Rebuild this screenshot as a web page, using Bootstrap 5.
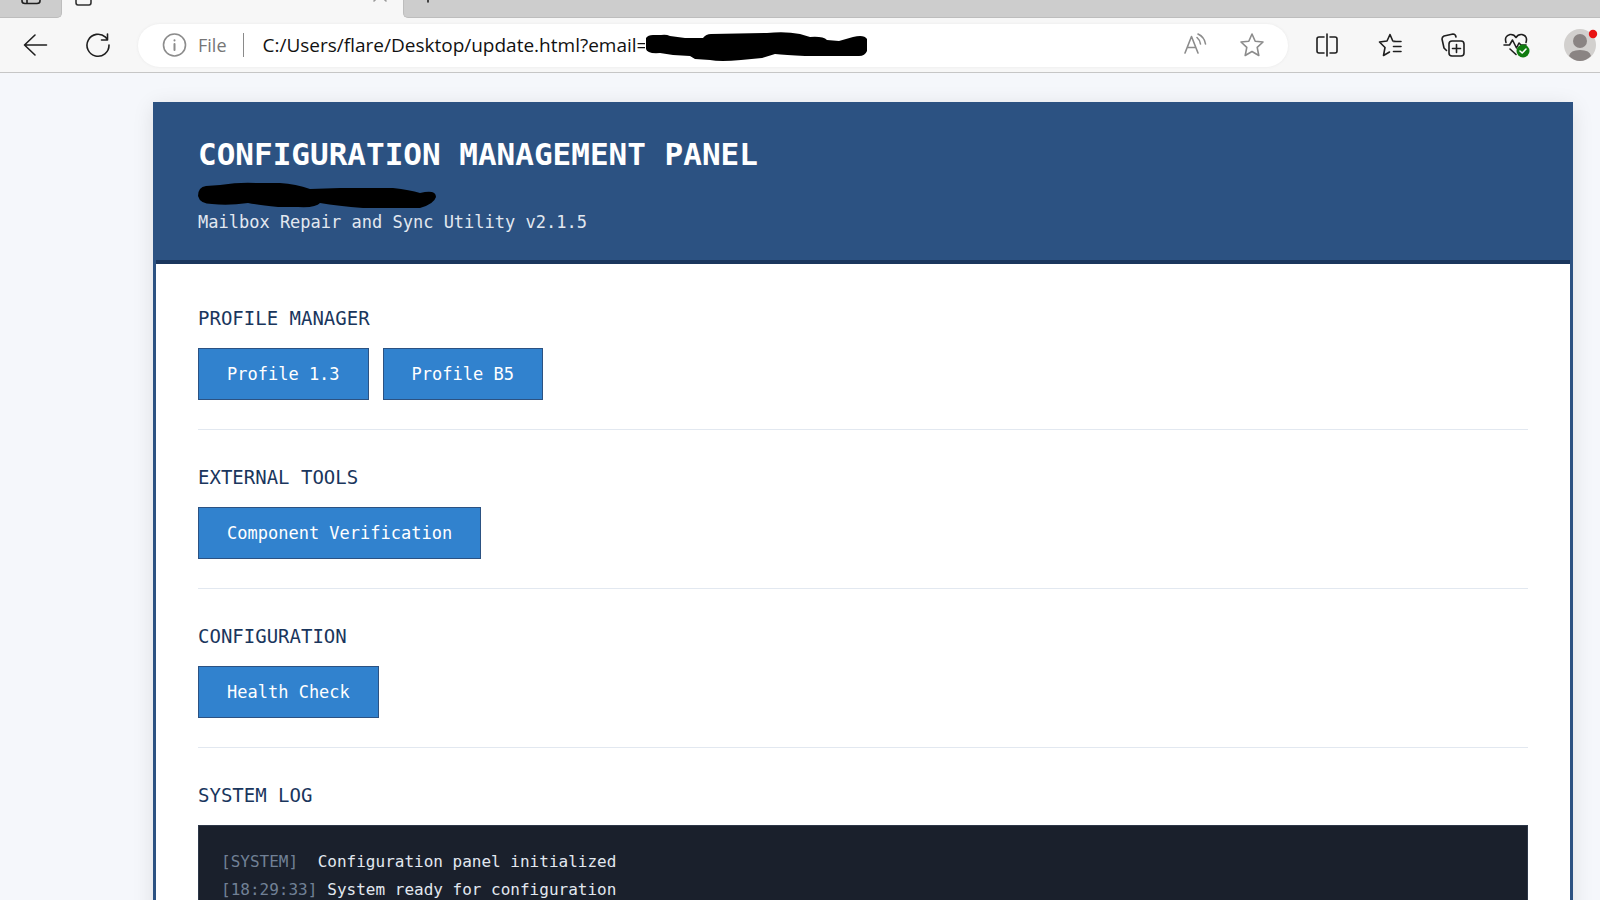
<!DOCTYPE html>
<html lang="en">
<head>
<meta charset="utf-8">
<meta name="viewport" content="width=device-width, initial-scale=1">
<title>Configuration Management Panel</title>
<link href="https://cdn.jsdelivr.net/npm/bootstrap@5.3.0/dist/css/bootstrap.min.css" rel="stylesheet">
<style>
  :root { --navy: #2c5282; --navy-dark: #1a365d; --ink: #1f1f1f; }
  body { background: #f5f7fb; font-family: "DejaVu Sans Mono", monospace; }
  svg { display: block; flex: none; fill: none; overflow: visible; }
  .icon-btn { border: 0; background: none; padding: 0; color: var(--ink); flex: none; }
  .icon-btn svg { stroke: currentColor; stroke-width: 1.6; stroke-linecap: round; stroke-linejoin: round; }

  .tab-strip { height: 18px; background: #f7f7f7; }
  .strip-part { background: #cdcdcd; border-bottom: 1px solid #bdbdbd; }
  .strip-start { width: 62px; border-right: 1px solid #bdbdbd; border-bottom-right-radius: 5px; }
  .strip-rest { border-left: 1px solid #bdbdbd; border-bottom-left-radius: 5px; }
  .strip-tab { width: 341px; }

  .toolbar { height: 55px; background: #f7f7f7; border-bottom: 1px solid #c6c6c6; padding: 0 4px 0 23px; font-family: "Open Sans", sans-serif; }
  .nav-btns { gap: 39px; margin-right: 28px; }
  .side-btns { gap: 39px; margin-left: 27px; }
  .address { height: 43px; background: #fff; border-radius: 22px; padding: 0 24px; box-shadow: 0 0 3px #e8e8e8; }
  .address .icon-btn { color: #8c8c8c; }
  .scheme { color: #767676; font-size: 18px; }
  .scheme-rule { width: 1px; height: 24px; background: #8a8a8a; margin: 0 19px 0 16px; }
  .url { width: 382px; flex: none; border: 0; padding: 0; outline: 0; color: #111; font: 19px "Open Sans", sans-serif; background: none; }
  .avatar { margin-left: 36px; }

  .page-view { padding: 29px 27px 0 153px; min-height: 0; }
  .panel { background: #fff; border: 3px solid var(--navy); border-top: 0; box-shadow: 0 4px 20px rgba(0,0,0,.1); }
  .panel-head { background: var(--navy); border-bottom: 4px solid var(--navy-dark); color: #fff; padding: 33px 42px 25px; }
  .panel-head h1 { font-size: 31px; line-height: 38px; font-weight: 700; margin: 0 0 9px; }
  .panel-head p { font-size: 17px; line-height: 26px; color: #e2e8f0; margin: 0; }
  .panel-body { padding: 42px 42px; }
  .tool-group { border-bottom: 1px solid #e2e8f0; padding-bottom: 29px; margin-bottom: 35px; }
  .tool-group:last-child { border: 0; }
  .tool-group h2 { font-size: 19px; line-height: 24px; font-weight: 400; color: var(--navy-dark); margin: 0 0 18px; }
  .tool-btn { --bs-btn-color: #fff; --bs-btn-bg: #3182ce; --bs-btn-border-color: var(--navy); --bs-btn-hover-color: #fff; --bs-btn-hover-bg: var(--navy);
    --bs-btn-border-radius: 0; --bs-btn-font-size: 17px; --bs-btn-padding-x: 28px; --bs-btn-padding-y: 11px; --bs-btn-line-height: 28px; }
  .btn-row { gap: 14px; }
  .log { background: #1a202c; border: 1px solid #2d3748; color: #e2e8f0; font-size: 16px; line-height: 28px; padding: 22px; height: 300px; }
  .log time, .log .source { color: #718096; margin-right: 10px; }
</style>
</head>
<body class="vh-100 d-flex flex-column overflow-hidden">

<header class="flex-shrink-0">
  <div class="tab-strip d-flex">
    <div class="strip-part strip-start d-flex justify-content-center">
      <button class="icon-btn" aria-label="Tab actions"><svg width="20" height="18"><path d="M1 -6V1Q1 3.500 4 3.500H16Q19 3.500 19 1V-6M6 3V-6M6 -1H18"/></svg></button>
    </div>
    <div class="strip-tab d-flex justify-content-between px-2">
      <svg class="ms-1" width="18" height="18" stroke="#333" stroke-width="1.600"><path d="M2 -6V2.500Q2 5 4 5H15Q17 5 17 2.500V-6"/></svg>
      <button class="icon-btn me-2" aria-label="Close tab"><svg width="14" height="18"><path d="M1 1L5 -3M13 1L9 -3" stroke="#999"/></svg></button>
    </div>
    <div class="strip-part strip-rest flex-grow-1 d-flex">
      <button class="icon-btn ms-3" aria-label="New tab"><svg width="16" height="18"><path d="M8 -8V2"/></svg></button>
    </div>
  </div>

  <nav class="toolbar d-flex align-items-center" aria-label="Browser toolbar">
    <div class="nav-btns d-flex">
      <button class="icon-btn" aria-label="Back"><svg width="24" height="24"><path d="M23.500 12H1.500M12 2L1.500 12L12 22"/></svg></button>
      <button class="icon-btn" aria-label="Refresh"><svg width="24" height="24"><path d="M23 12A11 11 0 1 1 19.500 4.200L21.500 6.500M21.500 1V7H15.500"/></svg></button>
    </div>

    <div class="address d-flex align-items-center flex-grow-1">
      <button class="icon-btn" aria-label="Site information"><svg width="24" height="24"><circle cx="12.500" cy="12" r="11"/><path d="M12.500 11V17M12.500 7.200V7.600" stroke-width="2"/></svg></button>
      <span class="scheme ms-2 ps-1">File</span>
      <span class="scheme-rule"></span>
      <input class="url" type="text" aria-label="Address" value="C:/Users/flare/Desktop/update.html?email=">
      <svg width="224" height="28" style="fill:#000"><path d="M1 7Q3 4 8 4H16Q21 3 25 5L40 7L58 7Q61 3 66 3L122 2Q140 0 155 3L165 6Q178 5 182 9L194 10L208 6Q219 3 222 8V20Q220 25 214 25L160 25Q140 24 130 23L117 27L96 29Q75 31 65 29L50 28L45 25L28 24L15 22Q2 23 1 18Z"/></svg>
      <button class="icon-btn ms-auto" aria-label="Read aloud"><svg width="24" height="24"><path d="M1 20L7.500 3.500L14 20M3.500 14.500H11.500M13 4.500Q16 7 16.500 11M14 1Q20.500 4 21.500 11"/></svg></button>
      <button class="icon-btn ms-4 ps-2" aria-label="Add to favorites"><svg width="24" height="24"><path d="M12 1L15.200 8.200L23 9L17.200 14.400L18.800 22.500L12 18.500L5.200 22.500L6.800 14.400L1 9L8.800 8.200Z"/></svg></button>
    </div>

    <div class="side-btns d-flex">
      <button class="icon-btn" aria-label="Split screen"><svg width="24" height="24"><path d="M9 4H4Q2 4 2 6V18Q2 20 4 20H9M15 4H20Q22 4 22 6V18Q22 20 20 20H15M12 1V23"/></svg></button>
      <button class="icon-btn" aria-label="Favorites"><svg width="24" height="24"><path d="M17 8.300L14.800 8L12 1.500L9 8L1.500 9L7 14.500L5.500 22.500L11.500 19M15.500 8.500H23M15.500 13.500H23M15.500 18.500H23"/></svg></button>
      <button class="icon-btn" aria-label="Collections"><svg width="24" height="24"><path d="M5.500 17.500L3 15L1 6Q1 4 3 3L12 1Q14.500 1 15 4"/><rect x="8" y="8" width="15" height="15" rx="3"/><path d="M15.500 11.500V19.500M11.500 15.500H19.500"/></svg></button>
      <button class="icon-btn" aria-label="Browser essentials"><svg width="24" height="24"><path d="M2 9.500Q0 3 6 1.500Q10 1 12 4.500Q14 1 18 1.500Q24 3 22 9.500M0 12H5.500L8.500 7L12.500 15L15 10L17 12H22M6 16L12 21.500"/><circle cx="19" cy="18" r="6.500" fill="#107c10" stroke="none"/><path d="M16 18L18.200 20L22 16" stroke="#fff"/></svg></button>
    </div>
    <button class="icon-btn avatar" aria-label="Profile"><svg width="32" height="32" style="stroke:none"><circle cx="16" cy="16" r="16" fill="#d2d0ce"/><circle cx="16" cy="12" r="7" fill="#8a8483"/><path d="M5 27Q6 21 16 21Q26 21 27 27Q22 32 16 32Q10 32 5 27Z" fill="#8a8483"/><circle cx="29" cy="5" r="4.200" fill="#e81313"/></svg></button>
  </nav>
</header>

<main class="page-view flex-grow-1 overflow-hidden">
  <div class="panel">
    <div class="panel-head">
      <h1>CONFIGURATION MANAGEMENT PANEL</h1>
      <svg width="238" height="27" style="fill:#000"><path d="M0 14Q0 5 8 4L22 3Q42 0 58 1L82 1Q98 2 112 7L142 6H195Q212 8 222 11Q238 7 238 15Q236 22 222 26L165 26Q140 24 122 21Q118 26 100 25L80 25Q60 23 50 21Q30 24 14 22Q2 22 0 14Z"/></svg>
      <p>Mailbox Repair and Sync Utility v2.1.5</p>
    </div>

    <div class="panel-body">
      <section class="tool-group">
        <h2>PROFILE MANAGER</h2>
        <div class="btn-row d-flex">
          <button type="button" class="btn tool-btn">Profile 1.3</button>
          <button type="button" class="btn tool-btn">Profile B5</button>
        </div>
      </section>
      <section class="tool-group">
        <h2>EXTERNAL TOOLS</h2>
        <div class="btn-row d-flex">
          <button type="button" class="btn tool-btn">Component Verification</button>
        </div>
      </section>
      <section class="tool-group">
        <h2>CONFIGURATION</h2>
        <div class="btn-row d-flex">
          <button type="button" class="btn tool-btn">Health Check</button>
        </div>
      </section>
      <section class="tool-group">
        <h2>SYSTEM LOG</h2>
        <div class="log">
          <div><span class="source">[SYSTEM]</span>&nbsp;Configuration panel initialized</div>
          <div><time>[18:29:33]</time>System ready for configuration</div>
        </div>
      </section>
    </div>
  </div>
</main>

<script src="https://cdn.jsdelivr.net/npm/bootstrap@5.3.0/dist/js/bootstrap.bundle.min.js"></script>
</body>
</html>
